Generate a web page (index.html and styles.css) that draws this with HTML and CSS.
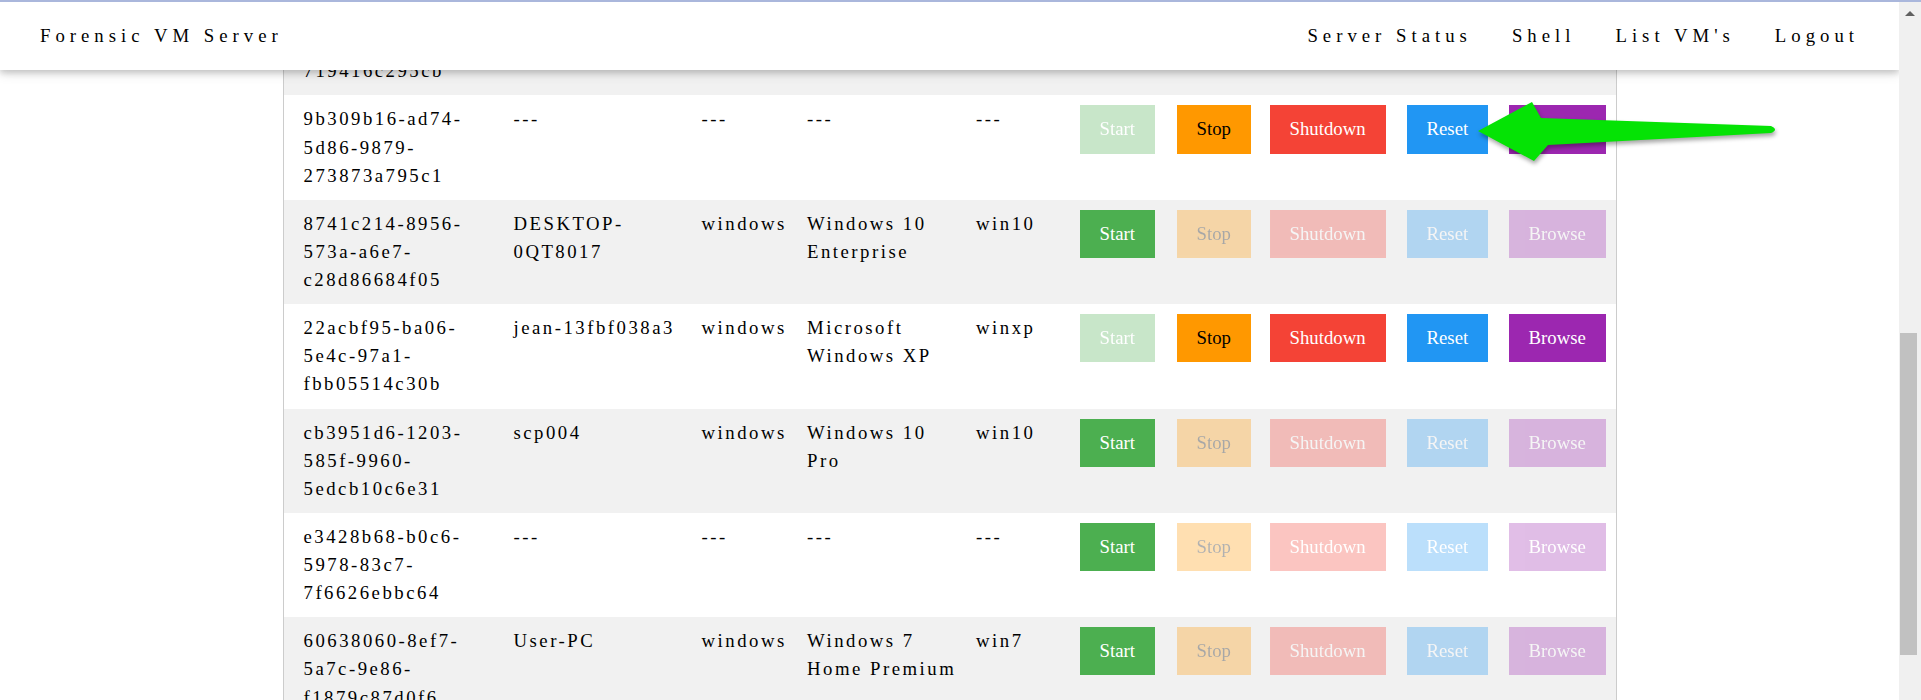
FILE: index.html
```html
<!DOCTYPE html>
<html lang="en">
<head>
<meta charset="utf-8">
<title>Forensic VM Server</title>
<link rel="stylesheet" href="styles.css">
</head>
<body>
<div class="frame-line"></div>
<div class="window">
  <div class="viewport">
    <header class="navbar">
      <a class="nav-item" href="#">Forensic VM Server</a>
      <nav class="nav-links">
        <a class="nav-item" href="#">Server Status</a>
        <a class="nav-item" href="#">Shell</a>
        <a class="nav-item" href="#">List VM's</a>
        <a class="nav-item" href="#">Logout</a>
      </nav>
    </header>
    <main class="content">
      <table class="vm-table">
        <colgroup>
          <col class="c-uuid"><col class="c-host"><col class="c-os"><col class="c-name"><col class="c-type">
          <col class="c-start"><col class="c-stop"><col class="c-shut"><col class="c-reset"><col class="c-browse">
        </colgroup>
        <tbody>
          <tr>
            <td>f0b3c6d2-4a8e-5f21-8d3b-719416c295cb</td><td></td><td class="nw"></td><td></td><td class="nw"></td>
            <td class="bc"></td>
            <td class="bc"></td>
            <td class="bc"></td>
            <td class="bc"></td>
            <td class="bc"></td>
          </tr>
          <tr>
            <td>9b309b16-ad74-5d86-9879-273873a795c1</td><td>---</td><td class="nw">---</td><td>---</td><td class="nw">---</td>
            <td class="bc"><button class="btn green" disabled>Start</button></td>
            <td class="bc"><button class="btn orange">Stop</button></td>
            <td class="bc"><button class="btn red">Shutdown</button></td>
            <td class="bc"><button class="btn blue">Reset</button></td>
            <td class="bc"><button class="btn purple">Browse</button></td>
          </tr>
          <tr>
            <td>8741c214-8956-573a-a6e7-c28d86684f05</td><td>DESKTOP-0QT8017</td><td class="nw">windows</td><td>Windows 10 Enterprise</td><td class="nw">win10</td>
            <td class="bc"><button class="btn green">Start</button></td>
            <td class="bc"><button class="btn orange" disabled>Stop</button></td>
            <td class="bc"><button class="btn red" disabled>Shutdown</button></td>
            <td class="bc"><button class="btn blue" disabled>Reset</button></td>
            <td class="bc"><button class="btn purple" disabled>Browse</button></td>
          </tr>
          <tr>
            <td>22acbf95-ba06-5e4c-97a1-fbb05514c30b</td><td>jean-13fbf038a3</td><td class="nw">windows</td><td>Microsoft Windows XP</td><td class="nw">winxp</td>
            <td class="bc"><button class="btn green" disabled>Start</button></td>
            <td class="bc"><button class="btn orange">Stop</button></td>
            <td class="bc"><button class="btn red">Shutdown</button></td>
            <td class="bc"><button class="btn blue">Reset</button></td>
            <td class="bc"><button class="btn purple">Browse</button></td>
          </tr>
          <tr>
            <td>cb3951d6-1203-585f-9960-5edcb10c6e31</td><td>scp004</td><td class="nw">windows</td><td>Windows 10 Pro</td><td class="nw">win10</td>
            <td class="bc"><button class="btn green">Start</button></td>
            <td class="bc"><button class="btn orange" disabled>Stop</button></td>
            <td class="bc"><button class="btn red" disabled>Shutdown</button></td>
            <td class="bc"><button class="btn blue" disabled>Reset</button></td>
            <td class="bc"><button class="btn purple" disabled>Browse</button></td>
          </tr>
          <tr>
            <td>e3428b68-b0c6-5978-83c7-7f6626ebbc64</td><td>---</td><td class="nw">---</td><td>---</td><td class="nw">---</td>
            <td class="bc"><button class="btn green">Start</button></td>
            <td class="bc"><button class="btn orange" disabled>Stop</button></td>
            <td class="bc"><button class="btn red" disabled>Shutdown</button></td>
            <td class="bc"><button class="btn blue" disabled>Reset</button></td>
            <td class="bc"><button class="btn purple" disabled>Browse</button></td>
          </tr>
          <tr>
            <td>60638060-8ef7-5a7c-9e86-f1879c87d0f6</td><td>User-PC</td><td class="nw">windows</td><td>Windows 7 Home Premium</td><td class="nw">win7</td>
            <td class="bc"><button class="btn green">Start</button></td>
            <td class="bc"><button class="btn orange" disabled>Stop</button></td>
            <td class="bc"><button class="btn red" disabled>Shutdown</button></td>
            <td class="bc"><button class="btn blue" disabled>Reset</button></td>
            <td class="bc"><button class="btn purple" disabled>Browse</button></td>
          </tr>
        </tbody>
      </table>
    </main>
  </div>
  <div class="scrollbar">
    <div class="sb-arrow"></div>
    <div class="sb-thumb"></div>
  </div>
</div>
<svg class="annotation" width="1921" height="700" viewBox="0 0 1921 700" aria-hidden="true">
  <path class="arrow" d="M1478,131 L1532,102 L1541,118 L1771,126 Q1779,129.5 1771,133 L1548,145 L1534,161 Z"/>
</svg>
</body>
</html>
```
FILE: styles.css
```css
html, body {
  margin: 0;
  height: 100%;
}

body {
  position: relative;
  display: flex;
  flex-direction: column;
  overflow: hidden;
  background: #fff;
  color: #000;
  font-family: "Liberation Serif", "Times New Roman", serif;
  font-size: 18.75px;
  line-height: 28.125px;
}

.frame-line {
  flex: none;
  height: 2px;
  background: #aab7dc;
}

.window {
  flex: 1;
  display: flex;
  min-height: 0;
}

.viewport {
  flex: 1;
  position: relative;
  overflow: hidden;
}

/* fixed top bar that overlays the scrolled content */
.navbar {
  position: absolute;
  top: 0;
  left: 0;
  right: 0;
  z-index: 2;
  display: flex;
  justify-content: space-between;
  align-items: center;
  padding: 10px 20px;
  background: #fff;
  letter-spacing: 5px;
  box-shadow: 0 2.5px 6px 0 rgba(0, 0, 0, 0.16), 0 2.5px 12px 0 rgba(0, 0, 0, 0.12);
}

.nav-links {
  display: flex;
}

.nav-item {
  display: block;
  padding: 10px 20px;
  color: #000;
  text-decoration: none;
  white-space: nowrap;
}

/* the page is scrolled: the first row starts above the viewport */
.content {
  box-sizing: border-box;
  width: 1334px;
  margin: -10.9px auto 0;
  border-left: 1px solid #ccc;
  border-right: 1px solid #ccc;
}

.vm-table {
  width: 100%;
  border-collapse: collapse;
  table-layout: fixed;
}

.c-uuid { width: 220px; }
.c-host { width: 188px; }
.c-os { width: 105.5px; }
.c-name { width: 169px; }
.c-type { width: 103.5px; }
.c-start { width: 97px; }
.c-stop { width: 93px; }
.c-shut { width: 137px; }
.c-reset { width: 102px; }
.c-browse { width: 117px; }

.vm-table tr {
  background: #fff;
}

.vm-table tr:nth-child(odd) {
  background: #f1f1f1;
}

.vm-table td {
  padding: 10px 4px 10px 10px;
  vertical-align: top;
  text-align: left;
  letter-spacing: 2.5px;
}

.vm-table td:first-child {
  padding-left: 20px;
}

.vm-table td.nw {
  white-space: nowrap;
}

.vm-table td.bc {
  padding: 10px;
  letter-spacing: 0;
}

.btn {
  display: inline-block;
  vertical-align: top;
  margin: 0;
  padding: 10px 20px;
  border: 0;
  border-radius: 0;
  font-family: "Liberation Serif", "Times New Roman", serif;
  font-size: 18.75px;
  font-weight: normal;
  line-height: 28.125px;
  letter-spacing: 0;
  white-space: nowrap;
  color: #fff;
  cursor: pointer;
}

.btn:disabled {
  opacity: 0.3;
  cursor: not-allowed;
}

.green { background: #4caf50; color: #fff; }
.orange { background: #ff9800; color: #000; }
.red { background: #f44336; color: #fff; }
.blue { background: #2196f3; color: #fff; }
.purple { background: #9c27b0; color: #fff; }

.scrollbar {
  flex: none;
  width: 22px;
  background: #f0f0f0;
  display: flex;
  flex-direction: column;
}

.sb-arrow {
  align-self: center;
  width: 0;
  height: 0;
  margin-top: 9px;
  border-left: 5px solid transparent;
  border-right: 5px solid transparent;
  border-bottom: 5px solid #606060;
}

.sb-thumb {
  width: 17px;
  height: 322px;
  margin: 317px 0 0 1px;
  background: #c1c1c1;
}

/* annotation drawn on top of the screenshot */
.annotation {
  position: absolute;
  left: 0;
  top: 0;
  z-index: 5;
  pointer-events: none;
}

.arrow {
  fill: #05e305;
  filter: drop-shadow(1px 3px 2px rgba(0, 0, 0, 0.35));
}
```
